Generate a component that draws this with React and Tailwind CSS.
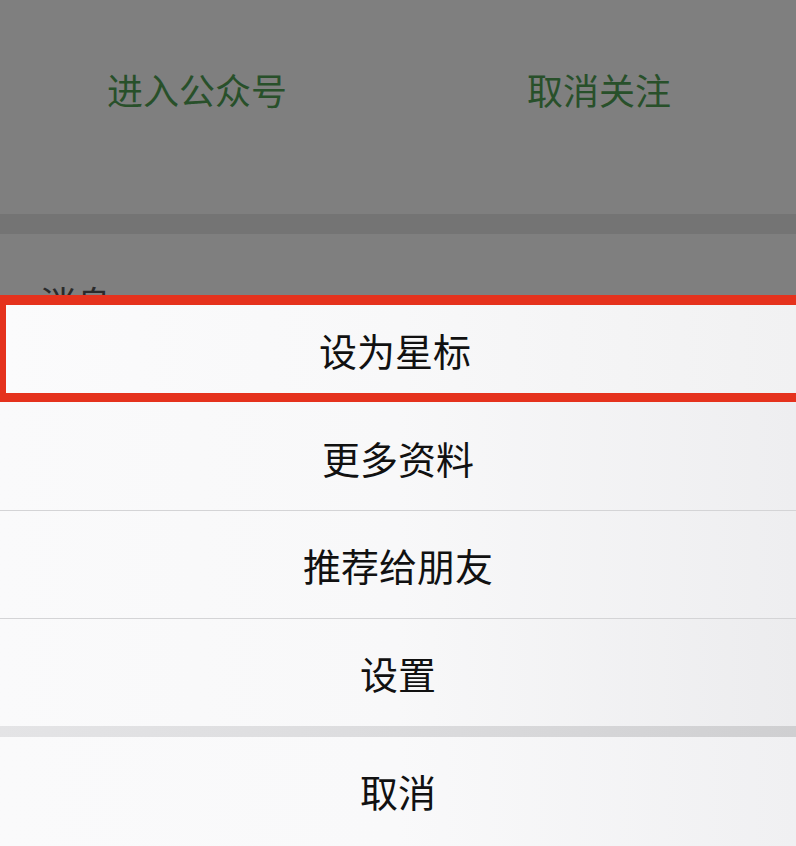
export default function App() {
  const font = { fontFamily: '"Noto Sans CJK SC", "Noto Sans", sans-serif' };
  return (
    <div className="w-[796px] h-[846px] overflow-hidden bg-[#7f7f7f] flex flex-col" style={font}>
      <div className="h-[214px] flex items-start pt-[65px]">
        <div className="flex-1 flex justify-center pr-[8px] text-[36px] leading-[48px] text-[#28502a]">进入公众号</div>
        <div className="flex-1 flex justify-center text-[36px] leading-[48px] text-[#28502a]">取消关注</div>
      </div>
      <div className="h-[20px] bg-[#747474]"></div>
      <div className="h-[61px] overflow-hidden relative">
        <div className="absolute left-[40px] top-[44px] text-[36px] leading-[48px] text-[#2a2a2a]">消息</div>
      </div>
      <div className="flex-1 flex flex-col bg-[#f8f8f9]">
        <div className="h-[107px] border-l-[6px] border-t-[10px] border-b-[9px] border-[#e5321d] bg-gradient-to-r from-[#fbfbfc] via-[#f8f8f9] to-[#f1f1f2] flex items-center justify-center pr-[12px] text-[38px] text-[#111]">
          设为星标
        </div>
        <div className="h-[109px] border-b border-[#d4d4d6] bg-gradient-to-r from-[#fafafb] via-[#f8f8f9] to-[#eeeef0] flex items-center justify-center text-[38px] text-[#111] pt-[2px]">
          更多资料
        </div>
        <div className="h-[108px] border-b border-[#d4d4d6] bg-gradient-to-r from-[#fafafb] via-[#f8f8f9] to-[#eeeef0] flex items-center justify-center text-[38px] text-[#111]">
          推荐给朋友
        </div>
        <div className="h-[107px] bg-gradient-to-r from-[#fafafb] via-[#f8f8f9] to-[#ececee] flex items-center justify-center text-[38px] text-[#111]">
          设置
        </div>
        <div className="h-[11px] bg-gradient-to-r from-[#e4e4e6] via-[#dcdcde] to-[#cfcfd1]"></div>
        <div className="flex-1 bg-gradient-to-r from-[#fafafb] via-[#f9f9fa] to-[#f0f0f2] flex items-center justify-center text-[38px] text-[#111] pb-[2px]">
          取消
        </div>
      </div>
    </div>
  );
}
